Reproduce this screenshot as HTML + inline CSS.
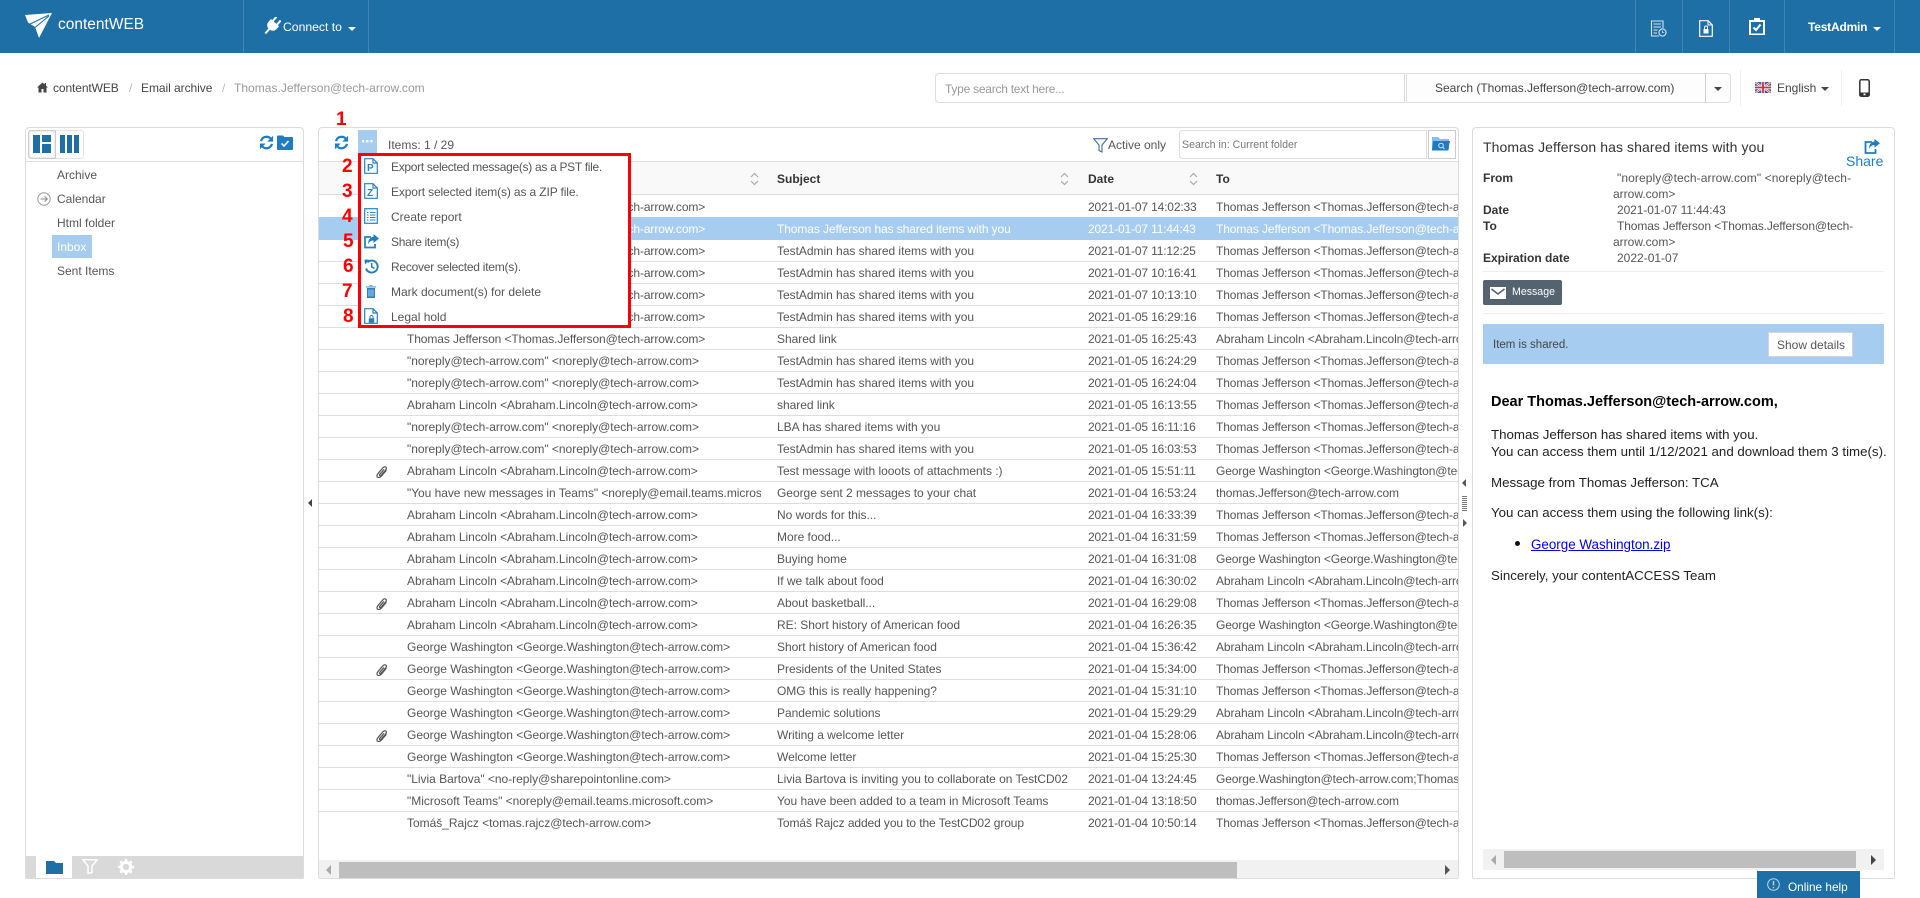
<!DOCTYPE html>
<html><head><meta charset="utf-8"><title>contentWEB</title>
<style>
html,body{margin:0;padding:0;background:#fff;width:1920px;height:898px;overflow:hidden}
body{font-family:"Liberation Sans",sans-serif;font-size:12px;color:#555;position:relative}
.a,.a *{box-sizing:border-box}
.a{position:absolute}
svg{display:block;position:absolute}
.t{position:absolute;white-space:nowrap;line-height:16px}
.hd{left:0;top:0;width:1920px;height:53px;background:#1d6fa5}
.dv{position:absolute;top:0;width:1px;height:53px;background:#3f86b5}
.panel{position:absolute;box-sizing:border-box;top:127px;height:752px;border:1px solid #dcdcdc;border-radius:4px 4px 2px 2px;background:#fff}
.r{position:absolute;left:319px;width:1139px;height:22px;border-bottom:1px solid #ddd;overflow:hidden;line-height:24px;color:#555;letter-spacing:-.1px}
.r span{position:absolute;top:0;white-space:nowrap;overflow:hidden;height:21px}
.r .f{left:88px;width:354px;letter-spacing:-.02px}
.r .s{left:458px;width:305px;letter-spacing:-.03px}
.r .d{left:769px;width:120px;letter-spacing:-.15px}
.r .o{left:897px;width:242px}
.r .f.x,.r .s.x{letter-spacing:-.1px}
.r .f.y{letter-spacing:-.05px}
.sel{background:#a6ccf0;color:#fff;border-bottom-color:#a6ccf0}
.m{position:absolute;left:391px;white-space:nowrap;line-height:16px;color:#555}
.n{position:absolute;color:#f00;font-weight:bold;font-size:19px;line-height:20px}
.b{font-weight:bold;color:#333}
</style></head><body>

<svg width="0" height="0" style="position:absolute"><defs>
<symbol id="ref" viewBox="0 0 16 16"><path d="M2.2 6.6A6 6 0 0 1 12.3 3.6" fill="none" stroke="#1f7cc0" stroke-width="2.4"/><path d="M15 .8V7H8.8z" fill="#1f7cc0"/><path d="M13.8 9.4A6 6 0 0 1 3.7 12.4" fill="none" stroke="#1f7cc0" stroke-width="2.4"/><path d="M1 15.2V9h6.2z" fill="#1f7cc0"/></symbol>
<symbol id="clip" viewBox="0 0 12 14"><path d="M10.4 5.2 5.3 11.2C4 12.7 2 12.8 1.4 12 .7 11.2 1 9.7 2.2 8.3L6.8 2.9C7.7 1.8 9 1.5 9.8 2.1 10.6 2.8 10.4 4 9.6 5L5.2 10.1C4.7 10.7 4 10.8 3.7 10.5 3.3 10.2 3.5 9.6 4 9L8 4.4" fill="none" stroke="#555" stroke-width="1.2"/></symbol>
<symbol id="sort" viewBox="0 0 9 14"><path d="M1 5 4.5 1.5 8 5M1 9 4.5 12.5 8 9" fill="none" stroke="#aaa" stroke-width="1.2"/></symbol>
<symbol id="doc" viewBox="0 0 14 16" preserveAspectRatio="none"><path d="M.7.7H9L13.3 5V15.3H.7z" fill="#fff" stroke="#2a7fc1" stroke-width="1.2"/><path d="M9 .7V5H13.3" fill="none" stroke="#2a7fc1" stroke-width="1.2"/></symbol>
</defs></svg>

<!-- header -->
<div class="a hd"></div>
<div class="dv" style="left:243px"></div><div class="dv" style="left:368px"></div>
<div class="dv" style="left:1635px"></div><div class="dv" style="left:1682px"></div><div class="dv" style="left:1729px"></div><div class="dv" style="left:1784px"></div><div class="dv" style="left:1894px"></div>
<svg style="left:25px;top:13px" width="28" height="25" viewBox="0 0 28 25"><path d="M0 2 27 0 14 25 10 14 3 9.5z" fill="#fff"/><path d="M3 12 24 2M7 17 24 3" stroke="#1d6fa5" stroke-width="1.1" fill="none"/></svg>
<div class="t" style="left:58px;top:16px;font-size:15.5px;line-height:18px;color:#fff">contentWEB</div>
<svg style="left:263px;top:17px" width="18" height="18" viewBox="0 0 18 18"><g transform="rotate(42 9 9)" fill="#fff"><rect x="5.2" y="-.8" width="2" height="5.3"/><rect x="10.8" y="-.8" width="2" height="5.3"/><path d="M3.6 4.5H14.4V8.5A5 5 0 0 1 10 13.3V19H8V13.3A5 5 0 0 1 3.6 8.5z"/></g></svg>
<div class="t" style="left:283px;top:19px;color:#fff;font-size:12.2px">Connect to</div>
<div class="a" style="left:348px;top:27px;border:4px solid transparent;border-top-color:#fff;border-bottom:0"></div>
<svg style="left:1650px;top:20px" width="17" height="17" viewBox="0 0 17 17"><path d="M13 8V1H1.5V16H9" fill="none" stroke="#d5e6f2" stroke-width="1.1"/><path d="M3.5 4H11M3.5 7H11M3.5 10H7.5M3.5 13H7" stroke="#d5e6f2" stroke-width="1"/><circle cx="12.5" cy="12.5" r="3.6" fill="none" stroke="#d5e6f2" stroke-width="1.1"/><path d="M12.5 10.5V12.5H14.2" stroke="#d5e6f2" stroke-width=".8" fill="none"/></svg>
<svg style="left:1699px;top:20px" width="14" height="17" viewBox="0 0 14 17"><path d="M.7.7H9L13.3 5V16.3H.7z" fill="none" stroke="#fff" stroke-width="1.2"/><path d="M9 .7V5H13.3" fill="none" stroke="#fff"/><rect x="4.5" y="9" width="5" height="4.5" fill="#fff"/><path d="M5.5 9V7.5A1.5 1.5 0 0 1 8.5 7.5V9" fill="none" stroke="#fff"/></svg>
<svg style="left:1749px;top:18px" width="16" height="17" viewBox="0 0 16 17"><path d="M1 3H15V16.5H1z" fill="none" stroke="#fff" stroke-width="2"/><rect x="5" y="0" width="6" height="4" fill="#fff"/><path d="M4.5 9.5 7 12 11.5 6.5" fill="none" stroke="#fff" stroke-width="2"/></svg>
<div class="t" style="left:1808px;top:19px;color:#fff;font-weight:bold;font-size:12px;letter-spacing:-.2px">TestAdmin</div>
<div class="a" style="left:1873px;top:27px;border:4px solid transparent;border-top-color:#fff;border-bottom:0"></div>

<!-- breadcrumb -->
<svg style="left:37px;top:82px" width="11" height="11" viewBox="0 0 11 11"><path d="M5.5 .5 0 5.5H1.5V10.5H4.5V7H6.5V10.5H9.5V5.5H11L9 3.7V1H7.7V2.5z" fill="#444"/></svg>
<div class="t" style="left:53px;top:80px;color:#444;letter-spacing:-.1px">contentWEB</div>
<div class="t" style="left:129px;top:80px;color:#bbb">/</div>
<div class="t" style="left:141px;top:80px;color:#444;letter-spacing:-.05px">Email archive</div>
<div class="t" style="left:222px;top:80px;color:#bbb">/</div>
<div class="t" style="left:234px;top:80px;color:#999;letter-spacing:.02px">Thomas.Jefferson@tech-arrow.com</div>

<!-- search -->
<div class="a" style="left:935px;top:73px;width:470px;height:30px;border:1px solid #ddd;border-radius:4px 0 0 4px;background:#fff"></div>
<div class="t" style="left:945px;top:81px;color:#999;letter-spacing:-.25px">Type search text here...</div>
<div class="a" style="left:1406px;top:73px;width:300px;height:30px;border:1px solid #ddd;background:#fdfdfd"></div>
<div class="t" style="left:1435px;top:80px;color:#444">Search (Thomas.Jefferson@tech-arrow.com)</div>
<div class="a" style="left:1705px;top:73px;width:26px;height:30px;border:1px solid #ddd;border-left:1px solid #ccc;border-radius:0 4px 4px 0;background:#fdfdfd"></div>
<div class="a" style="left:1714px;top:87px;border:4px solid transparent;border-top-color:#444;border-bottom:0"></div>
<div class="a" style="left:1740px;top:70px;width:1px;height:36px;background:#eee"></div>
<div class="a" style="left:1841px;top:70px;width:1px;height:36px;background:#eee"></div>
<svg style="left:1755px;top:82px" width="16" height="11" viewBox="0 0 16 11"><rect width="16" height="11" fill="#3b5a9a"/><path d="M0 0 16 11M16 0 0 11" stroke="#fff" stroke-width="2"/><path d="M0 0 16 11M16 0 0 11" stroke="#c8323c" stroke-width=".7"/><path d="M8 0V11M0 5.5H16" stroke="#fff" stroke-width="3.4"/><path d="M8 0V11M0 5.5H16" stroke="#c8323c" stroke-width="1.8"/></svg>
<div class="t" style="left:1777px;top:80px;color:#444">English</div>
<div class="a" style="left:1821px;top:87px;border:4px solid transparent;border-top-color:#444;border-bottom:0"></div>
<svg style="left:1859px;top:79px" width="11" height="18" viewBox="0 0 11 18"><rect x=".8" y=".8" width="9.4" height="16.4" rx="1.5" fill="none" stroke="#333" stroke-width="1.5"/><rect x=".8" y="13.5" width="9.4" height="3.7" fill="#333"/><rect x="4.5" y="14.5" width="2" height="1.8" fill="#fff"/></svg>

<!-- left panel -->
<div class="panel" style="left:25px;width:279px"></div>
<div class="a" style="left:26px;top:161px;width:277px;height:1px;background:#ddd"></div>
<div class="a" style="left:28px;top:130px;width:28px;height:29px;border:1px solid #ccc;border-radius:3px 0 0 3px;box-shadow:inset 0 0 2px #ccc"></div>
<div class="a" style="left:56px;top:130px;width:28px;height:29px;border:1px solid #e4e4e4;border-left:0;border-radius:0 3px 3px 0"></div>
<svg style="left:33px;top:135px" width="18" height="18" viewBox="0 0 18 18"><rect width="7" height="18" fill="#1d6fa5"/><rect x="9" width="9" height="7" fill="#1d6fa5"/><rect x="9" y="9" width="9" height="9" fill="#1d6fa5"/></svg>
<svg style="left:60px;top:135px" width="19" height="18" viewBox="0 0 19 18"><rect width="5" height="18" fill="#1d6fa5"/><rect x="7" width="5" height="18" fill="#1d6fa5"/><rect x="14" width="5" height="18" fill="#1d6fa5"/></svg>
<svg style="left:259px;top:135px" width="15" height="15"><use href="#ref"/></svg>
<svg style="left:277px;top:135px" width="16" height="15" viewBox="0 0 16 15"><path d="M0 1.5A1 1 0 0 1 1 .5H6L7.5 2H15A1 1 0 0 1 16 3V14A1 1 0 0 1 15 15H1A1 1 0 0 1 0 14z" fill="#1f7cc0"/><path d="M4.5 8.5 7 11 11.5 6" fill="none" stroke="#fff" stroke-width="1.6"/></svg>
<div class="t" style="left:57px;top:167px">Archive</div>
<svg style="left:37px;top:192px" width="14" height="14" viewBox="0 0 14 14"><circle cx="7" cy="7" r="6.2" fill="none" stroke="#999"/><path d="M3.5 7H10M7.5 4.2 10.3 7 7.5 9.8" fill="none" stroke="#888"/></svg>
<div class="t" style="left:57px;top:191px">Calendar</div>
<div class="t" style="left:57px;top:215px">Html folder</div>
<div class="a" style="left:52px;top:235px;width:40px;height:23px;background:#a6ccf0"></div>
<div class="t" style="left:57px;top:239px;color:#fff">Inbox</div>
<div class="t" style="left:57px;top:263px">Sent Items</div>
<div class="a" style="left:26px;top:856px;width:277px;height:22px;background:#d9d9d9"></div>
<div class="a" style="left:36px;top:856px;width:36px;height:22px;background:#fff"></div>
<svg style="left:46px;top:861px" width="17" height="13" viewBox="0 0 17 13"><path d="M0 0H8L10 2H17V13H0z" fill="#1d6fa5"/></svg>
<svg style="left:82px;top:859px" width="16" height="15" viewBox="0 0 16 15"><path d="M.8.8H15.2L10 7V13.5L6 14.5V7z" fill="none" stroke="#fff" stroke-width="1.5"/></svg>
<svg style="left:118px;top:859px" width="16" height="16" viewBox="0 0 16 16"><circle cx="8" cy="8" r="4.6" fill="none" stroke="#fff" stroke-width="3"/><path d="M8 0V3M8 13V16M0 8H3M13 8H16M2.3 2.3 4.4 4.4M11.6 11.6 13.7 13.7M13.7 2.3 11.6 4.4M4.4 11.6 2.3 13.7" stroke="#fff" stroke-width="2.6"/></svg>

<!-- main panel -->
<div class="panel" style="left:318px;width:1141px"></div>
<div class="a" style="left:319px;top:161px;width:1139px;height:34px;background:#f9f9f9;border-top:1px solid #ddd;border-bottom:1px solid #ddd"></div>
<svg style="left:334px;top:135px" width="15" height="15"><use href="#ref"/></svg>
<div class="a" style="left:358px;top:130px;width:19px;height:30px;background:#a6ccf0"></div>
<svg style="left:362px;top:140px" width="11" height="3" viewBox="0 0 11 3"><rect x="0" width="2.2" height="2.4" fill="#fff"/><rect x="4.2" width="2.2" height="2.4" fill="#fff"/><rect x="8.4" width="2.2" height="2.4" fill="#fff"/></svg>
<div class="t" style="left:388px;top:137px">Items: 1 / 29</div>
<svg style="left:1093px;top:138px" width="15" height="15" viewBox="0 0 15 15"><path d="M.7.7H14.3L9 7V14L6 12.5V7z" fill="none" stroke="#3f6f9f" stroke-width="1.1"/></svg>
<div class="t" style="left:1108px;top:137px">Active only</div>
<div class="a" style="left:1179px;top:130px;width:248px;height:29px;border:1px solid #ddd;border-radius:4px 0 0 4px"></div>
<div class="t" style="left:1182px;top:137px;color:#777;font-size:10.6px">Search in: Current folder</div>
<div class="a" style="left:1428px;top:130px;width:28px;height:29px;border:1px solid #ccc"></div>
<svg style="left:1432px;top:136px" width="18" height="15" viewBox="0 0 18 15"><path d="M0 1H6L8 3H17V14H0z" fill="#8cbde6"/><path d="M1 5H18L16 14.5H0z" fill="#1f7cc0"/><circle cx="9" cy="9.5" r="2.3" fill="none" stroke="#cfe4f5"/><path d="M10.8 11.2 12.5 13" stroke="#cfe4f5"/></svg>
<div class="t b" style="left:777px;top:171px">Subject</div>
<div class="t b" style="left:1088px;top:171px">Date</div>
<div class="t b" style="left:1216px;top:171px">To</div>
<svg style="left:750px;top:172px" width="9" height="14"><use href="#sort"/></svg>
<svg style="left:1060px;top:172px" width="9" height="14"><use href="#sort"/></svg>
<svg style="left:1189px;top:172px" width="9" height="14"><use href="#sort"/></svg>

<div class="r" style="top:195px"><span class="f x">Thomas Jefferson &lt;Thomas.Jefferson@tech-arrow.com&gt;</span><span class="d">2021-01-07 14:02:33</span><span class="o">Thomas Jefferson &lt;Thomas.Jefferson@tech-arrow.com&gt;</span></div>
<div class="r sel" style="top:217px"><span class="f x">Thomas Jefferson &lt;Thomas.Jefferson@tech-arrow.com&gt;</span><span class="s x">Thomas Jefferson has shared items with you</span><span class="d">2021-01-07 11:44:43</span><span class="o">Thomas Jefferson &lt;Thomas.Jefferson@tech-arrow.com&gt;</span></div>
<div class="r" style="top:239px"><span class="f x">Thomas Jefferson &lt;Thomas.Jefferson@tech-arrow.com&gt;</span><span class="s">TestAdmin has shared items with you</span><span class="d">2021-01-07 11:12:25</span><span class="o">Thomas Jefferson &lt;Thomas.Jefferson@tech-arrow.com&gt;</span></div>
<div class="r" style="top:261px"><span class="f x">Thomas Jefferson &lt;Thomas.Jefferson@tech-arrow.com&gt;</span><span class="s">TestAdmin has shared items with you</span><span class="d">2021-01-07 10:16:41</span><span class="o">Thomas Jefferson &lt;Thomas.Jefferson@tech-arrow.com&gt;</span></div>
<div class="r" style="top:283px"><span class="f x">Thomas Jefferson &lt;Thomas.Jefferson@tech-arrow.com&gt;</span><span class="s">TestAdmin has shared items with you</span><span class="d">2021-01-07 10:13:10</span><span class="o">Thomas Jefferson &lt;Thomas.Jefferson@tech-arrow.com&gt;</span></div>
<div class="r" style="top:305px"><span class="f x">Thomas Jefferson &lt;Thomas.Jefferson@tech-arrow.com&gt;</span><span class="s">TestAdmin has shared items with you</span><span class="d">2021-01-05 16:29:16</span><span class="o">Thomas Jefferson &lt;Thomas.Jefferson@tech-arrow.com&gt;</span></div>
<div class="r" style="top:327px"><span class="f x">Thomas Jefferson &lt;Thomas.Jefferson@tech-arrow.com&gt;</span><span class="s">Shared link</span><span class="d">2021-01-05 16:25:43</span><span class="o">Abraham Lincoln &lt;Abraham.Lincoln@tech-arrow.com&gt;</span></div>
<div class="r" style="top:349px"><span class="f">"noreply@tech-arrow.com" &lt;noreply@tech-arrow.com&gt;</span><span class="s">TestAdmin has shared items with you</span><span class="d">2021-01-05 16:24:29</span><span class="o">Thomas Jefferson &lt;Thomas.Jefferson@tech-arrow.com&gt;</span></div>
<div class="r" style="top:371px"><span class="f">"noreply@tech-arrow.com" &lt;noreply@tech-arrow.com&gt;</span><span class="s">TestAdmin has shared items with you</span><span class="d">2021-01-05 16:24:04</span><span class="o">Thomas Jefferson &lt;Thomas.Jefferson@tech-arrow.com&gt;</span></div>
<div class="r" style="top:393px"><span class="f">Abraham Lincoln &lt;Abraham.Lincoln@tech-arrow.com&gt;</span><span class="s">shared link</span><span class="d">2021-01-05 16:13:55</span><span class="o">Thomas Jefferson &lt;Thomas.Jefferson@tech-arrow.com&gt;</span></div>
<div class="r" style="top:415px"><span class="f">"noreply@tech-arrow.com" &lt;noreply@tech-arrow.com&gt;</span><span class="s">LBA has shared items with you</span><span class="d">2021-01-05 16:11:16</span><span class="o">Thomas Jefferson &lt;Thomas.Jefferson@tech-arrow.com&gt;</span></div>
<div class="r" style="top:437px"><span class="f">"noreply@tech-arrow.com" &lt;noreply@tech-arrow.com&gt;</span><span class="s">TestAdmin has shared items with you</span><span class="d">2021-01-05 16:03:53</span><span class="o">Thomas Jefferson &lt;Thomas.Jefferson@tech-arrow.com&gt;</span></div>
<div class="r" style="top:459px"><span class="f">Abraham Lincoln &lt;Abraham.Lincoln@tech-arrow.com&gt;</span><span class="s">Test message with looots of attachments :)</span><span class="d">2021-01-05 15:51:11</span><span class="o">George Washington &lt;George.Washington@tech-arrow.com&gt;</span></div>
<div class="r" style="top:481px"><span class="f y">"You have new messages in Teams" &lt;noreply@email.teams.microsoft.com&gt;</span><span class="s">George sent 2 messages to your chat</span><span class="d">2021-01-04 16:53:24</span><span class="o">thomas.Jefferson@tech-arrow.com</span></div>
<div class="r" style="top:503px"><span class="f">Abraham Lincoln &lt;Abraham.Lincoln@tech-arrow.com&gt;</span><span class="s">No words for this...</span><span class="d">2021-01-04 16:33:39</span><span class="o">Thomas Jefferson &lt;Thomas.Jefferson@tech-arrow.com&gt;</span></div>
<div class="r" style="top:525px"><span class="f">Abraham Lincoln &lt;Abraham.Lincoln@tech-arrow.com&gt;</span><span class="s">More food...</span><span class="d">2021-01-04 16:31:59</span><span class="o">Thomas Jefferson &lt;Thomas.Jefferson@tech-arrow.com&gt;</span></div>
<div class="r" style="top:547px"><span class="f">Abraham Lincoln &lt;Abraham.Lincoln@tech-arrow.com&gt;</span><span class="s">Buying home</span><span class="d">2021-01-04 16:31:08</span><span class="o">George Washington &lt;George.Washington@tech-arrow.com&gt;</span></div>
<div class="r" style="top:569px"><span class="f">Abraham Lincoln &lt;Abraham.Lincoln@tech-arrow.com&gt;</span><span class="s">If we talk about food</span><span class="d">2021-01-04 16:30:02</span><span class="o">Abraham Lincoln &lt;Abraham.Lincoln@tech-arrow.com&gt;</span></div>
<div class="r" style="top:591px"><span class="f">Abraham Lincoln &lt;Abraham.Lincoln@tech-arrow.com&gt;</span><span class="s">About basketball...</span><span class="d">2021-01-04 16:29:08</span><span class="o">Thomas Jefferson &lt;Thomas.Jefferson@tech-arrow.com&gt;</span></div>
<div class="r" style="top:613px"><span class="f">Abraham Lincoln &lt;Abraham.Lincoln@tech-arrow.com&gt;</span><span class="s">RE: Short history of American food</span><span class="d">2021-01-04 16:26:35</span><span class="o">George Washington &lt;George.Washington@tech-arrow.com&gt;</span></div>
<div class="r" style="top:635px"><span class="f">George Washington &lt;George.Washington@tech-arrow.com&gt;</span><span class="s">Short history of American food</span><span class="d">2021-01-04 15:36:42</span><span class="o">Abraham Lincoln &lt;Abraham.Lincoln@tech-arrow.com&gt;</span></div>
<div class="r" style="top:657px"><span class="f">George Washington &lt;George.Washington@tech-arrow.com&gt;</span><span class="s">Presidents of the United States</span><span class="d">2021-01-04 15:34:00</span><span class="o">Thomas Jefferson &lt;Thomas.Jefferson@tech-arrow.com&gt;</span></div>
<div class="r" style="top:679px"><span class="f">George Washington &lt;George.Washington@tech-arrow.com&gt;</span><span class="s">OMG this is really happening?</span><span class="d">2021-01-04 15:31:10</span><span class="o">Thomas Jefferson &lt;Thomas.Jefferson@tech-arrow.com&gt;</span></div>
<div class="r" style="top:701px"><span class="f">George Washington &lt;George.Washington@tech-arrow.com&gt;</span><span class="s">Pandemic solutions</span><span class="d">2021-01-04 15:29:29</span><span class="o">Abraham Lincoln &lt;Abraham.Lincoln@tech-arrow.com&gt;</span></div>
<div class="r" style="top:723px"><span class="f">George Washington &lt;George.Washington@tech-arrow.com&gt;</span><span class="s">Writing a welcome letter</span><span class="d">2021-01-04 15:28:06</span><span class="o">Abraham Lincoln &lt;Abraham.Lincoln@tech-arrow.com&gt;</span></div>
<div class="r" style="top:745px"><span class="f">George Washington &lt;George.Washington@tech-arrow.com&gt;</span><span class="s">Welcome letter</span><span class="d">2021-01-04 15:25:30</span><span class="o">Thomas Jefferson &lt;Thomas.Jefferson@tech-arrow.com&gt;</span></div>
<div class="r" style="top:767px"><span class="f">"Livia Bartova" &lt;no-reply@sharepointonline.com&gt;</span><span class="s">Livia Bartova is inviting you to collaborate on TestCD02</span><span class="d">2021-01-04 13:24:45</span><span class="o">George.Washington@tech-arrow.com;Thomas.Jefferson@tech-arrow.com</span></div>
<div class="r" style="top:789px"><span class="f">"Microsoft Teams" &lt;noreply@email.teams.microsoft.com&gt;</span><span class="s">You have been added to a team in Microsoft Teams</span><span class="d">2021-01-04 13:18:50</span><span class="o">thomas.Jefferson@tech-arrow.com</span></div>
<div class="r" style="top:811px;border-bottom:0"><span class="f">Tomáš_Rajcz &lt;tomas.rajcz@tech-arrow.com&gt;</span><span class="s x">Tomáš Rajcz added you to the TestCD02 group</span><span class="d">2021-01-04 10:50:14</span><span class="o">Thomas Jefferson &lt;Thomas.Jefferson@tech-arrow.com&gt;</span></div>

<svg style="left:376px;top:465px" width="12" height="14"><use href="#clip"/></svg>
<svg style="left:376px;top:597px" width="12" height="14"><use href="#clip"/></svg>
<svg style="left:376px;top:663px" width="12" height="14"><use href="#clip"/></svg>
<svg style="left:376px;top:729px" width="12" height="14"><use href="#clip"/></svg>

<!-- main h scrollbar -->
<div class="a" style="left:319px;top:860px;width:1139px;height:18px;background:#f1f1f1"></div>
<div class="a" style="left:339px;top:862px;width:898px;height:16px;background:#bebebe"></div>
<div class="a" style="left:326px;top:865px;border:5px solid transparent;border-right-color:#aaa;border-left:0"></div>
<div class="a" style="left:1445px;top:865px;border:5px solid transparent;border-left-color:#555;border-right:0"></div>

<!-- splitters -->
<div class="a" style="left:308px;top:499px;border:4px solid transparent;border-right-color:#444;border-left:0"></div>
<div class="a" style="left:1462px;top:479px;border:4px solid transparent;border-right-color:#555;border-left:0"></div>
<div class="a" style="left:1462px;top:496px;width:5px;height:15px;background:repeating-linear-gradient(#777 0 1px,#fff 1px 2px)"></div>
<div class="a" style="left:1463px;top:519px;border:4px solid transparent;border-left-color:#555;border-right:0"></div>

<!-- menu -->
<div class="a" style="left:358px;top:153px;width:273px;height:175px;background:#fff;border:3px solid #f00"></div>
<svg style="left:364px;top:158px" width="14" height="16"><use href="#doc" width="14" height="16"/></svg>
<div class="t" style="left:367px;top:163px;color:#2a7fc1;font-weight:bold;font-size:10px;line-height:11px">P</div>
<svg style="left:364px;top:183px" width="14" height="16"><use href="#doc" width="14" height="16"/></svg>
<div class="t" style="left:367px;top:188px;color:#2a7fc1;font-weight:bold;font-size:10px;line-height:11px">Z</div>
<svg style="left:364px;top:208px" width="14" height="16" viewBox="0 0 14 16"><rect x=".7" y=".7" width="12.6" height="14.6" fill="#fff" stroke="#2a7fc1" stroke-width="1.2"/><path d="M3 4.5H4.5M6 4.5H11.5M3 7H4.5M6 7H11.5M3 9.5H4.5M6 9.5H11.5M3 12H4.5M6 12H11.5" stroke="#2a7fc1"/></svg>
<svg style="left:363px;top:234px" width="16" height="15" viewBox="0 0 16 15"><path d="M8 3H2V13.5H12V10" fill="none" stroke="#2a7fc1" stroke-width="1.8"/><path d="M10.5 0 16 4.5 10.5 9V6.5C7.5 6.5 6 8 5 10.5 5 6 7 3 10.5 2.7z" fill="#1f7cc0"/></svg>
<svg style="left:364px;top:259px" width="15" height="15" viewBox="0 0 15 15"><path d="M3.5 3.2A6 6 0 1 1 2 9.5" fill="none" stroke="#1f7cc0" stroke-width="1.9"/><path d="M.5 .5 5.5.8 1 5.5z" fill="#1f7cc0"/><path d="M7.7 4V7.8L10.5 9.5" fill="none" stroke="#1f7cc0" stroke-width="1.5"/></svg>
<svg style="left:366px;top:285px" width="10" height="13" viewBox="0 0 10 13"><path d="M0 1.2H10V2.6H0zM3.5 0H6.5V1.2H3.5z" fill="#7ab0dc"/><path d="M1 3H9V13H1z" fill="#2a7fc1"/><path d="M3 4.5V11.5M5 4.5V11.5M7 4.5V11.5" stroke="#cde2f3" stroke-width=".8"/></svg>
<svg style="left:364px;top:308px" width="14" height="16"><use href="#doc" width="14" height="16"/></svg>
<svg style="left:367.5px;top:315px" width="7" height="8" viewBox="0 0 9 10"><rect x="1" y="4" width="7" height="6" fill="#2a7fc1"/><path d="M2.5 4V2.5A2 2 0 0 1 6.5 2.5V4" fill="none" stroke="#2a7fc1" stroke-width="1.2"/></svg>
<div class="m" style="top:159px;letter-spacing:-.3px">Export selected message(s) as a PST file.</div>
<div class="m" style="top:184px;letter-spacing:-.13px">Export selected item(s) as a ZIP file.</div>
<div class="m" style="top:209px">Create report</div>
<div class="m" style="top:234px;letter-spacing:-.3px">Share item(s)</div>
<div class="m" style="top:259px;letter-spacing:-.25px">Recover selected item(s).</div>
<div class="m" style="top:284px">Mark document(s) for delete</div>
<div class="m" style="top:309px">Legal hold</div>
<div class="n" style="left:336px;top:110px">1</div>
<div class="n" style="left:342px;top:157px">2</div>
<div class="n" style="left:342px;top:182px">3</div>
<div class="n" style="left:342px;top:207px">4</div>
<div class="n" style="left:343px;top:232px">5</div>
<div class="n" style="left:343px;top:257px">6</div>
<div class="n" style="left:342px;top:282px">7</div>
<div class="n" style="left:343px;top:307px">8</div>

<!-- right panel -->
<div class="panel" style="left:1472px;width:423px"></div>
<div class="t" style="left:1483px;top:139px;font-size:14px;color:#333;letter-spacing:.09px">Thomas Jefferson has shared items with you</div>
<svg style="left:1864px;top:139px" width="16" height="15" viewBox="0 0 16 15"><path d="M8 3H1.5V14H11.5V10" fill="none" stroke="#1f7cc0" stroke-width="1.8"/><path d="M10.5 0 16 4.3 10.5 8.7V6C7.8 6 6.2 7.5 5 10 5 5.8 7 2.7 10.5 2.5z" fill="#1f7cc0"/></svg>
<div class="t" style="left:1846px;top:153px;font-size:14px;color:#1f7cc0">Share</div>
<div class="t b" style="left:1483px;top:170px">From</div>
<div class="t" style="left:1617px;top:170px;letter-spacing:.09px">"noreply@tech-arrow.com" &lt;noreply@tech-</div>
<div class="t" style="left:1613px;top:186px">arrow.com&gt;</div>
<div class="t b" style="left:1483px;top:202px">Date</div>
<div class="t" style="left:1617px;top:202px;letter-spacing:-.1px">2021-01-07 11:44:43</div>
<div class="t b" style="left:1483px;top:218px">To</div>
<div class="t" style="left:1617px;top:218px;letter-spacing:-.12px">Thomas Jefferson &lt;Thomas.Jefferson@tech-</div>
<div class="t" style="left:1613px;top:234px">arrow.com&gt;</div>
<div class="t b" style="left:1483px;top:250px">Expiration date</div>
<div class="t" style="left:1617px;top:250px">2022-01-07</div>
<div class="a" style="left:1483px;top:271px;width:401px;height:1px;background:#eee"></div>
<div class="a" style="left:1483px;top:280px;width:79px;height:25px;background:#54636f;border-radius:2px"></div>
<svg style="left:1490px;top:287px" width="16" height="12" viewBox="0 0 16 12"><rect width="16" height="12" fill="#fff"/><path d="M1.5 2 8 7 14.5 2" fill="none" stroke="#54636f" stroke-width="1.6"/></svg>
<div class="t" style="left:1512px;top:284px;color:#fff;font-size:10.6px">Message</div>
<div class="a" style="left:1483px;top:313px;width:401px;height:1px;background:#eee"></div>
<div class="a" style="left:1483px;top:324px;width:401px;height:40px;background:#a6ccf0"></div>
<div class="t" style="left:1493px;top:337px;color:#444;font-size:11.5px">Item is shared.</div>
<div class="a" style="left:1768px;top:332px;width:85px;height:25px;background:#fff;border:1px solid #d5d5d5"></div>
<div class="t" style="left:1777px;top:337px;color:#555">Show details</div>
<div class="t" style="left:1491px;top:393px;color:#000;font-weight:bold;font-size:14.5px;line-height:18px">Dear Thomas.Jefferson@tech-arrow.com,</div>
<div class="t" style="left:1491px;top:427px;color:#222;font-size:13.3px">Thomas Jefferson has shared items with you.</div>
<div class="t" style="left:1491px;top:444px;color:#222;font-size:13.3px">You can access them until 1/12/2021 and download them 3 time(s).</div>
<div class="t" style="left:1491px;top:475px;color:#222;font-size:13.3px">Message from Thomas Jefferson: TCA</div>
<div class="t" style="left:1491px;top:505px;color:#222;font-size:13.3px">You can access them using the following link(s):</div>
<div class="a" style="left:1515px;top:541px;width:5px;height:5px;border-radius:50%;background:#111"></div>
<div class="t" style="left:1531px;top:537px;color:#00e;font-size:13.4px;text-decoration:underline">George Washington.zip</div>
<div class="t" style="left:1491px;top:568px;color:#222;font-size:13.3px">Sincerely, your contentACCESS Team</div>
<div class="a" style="left:1483px;top:849px;width:401px;height:21px;background:#f1f1f1"></div>
<div class="a" style="left:1504px;top:851px;width:352px;height:17px;background:#bebebe"></div>
<div class="a" style="left:1491px;top:855px;border:5px solid transparent;border-right-color:#aaa;border-left:0"></div>
<div class="a" style="left:1871px;top:855px;border:5px solid transparent;border-left-color:#444;border-right:0"></div>

<!-- online help -->
<div class="a" style="left:1757px;top:871px;width:103px;height:27px;background:#1d6fa5"></div>
<svg style="left:1767px;top:878px" width="13" height="13" viewBox="0 0 13 13"><circle cx="6.5" cy="6.5" r="5.8" fill="none" stroke="#bcd6e8"/><path d="M6.5 3V7.5M6.5 9V10.2" stroke="#bcd6e8" stroke-width="1.4"/></svg>
<div class="t" style="left:1788px;top:879px;color:#fff;font-size:11.8px">Online help</div>
</body></html>
